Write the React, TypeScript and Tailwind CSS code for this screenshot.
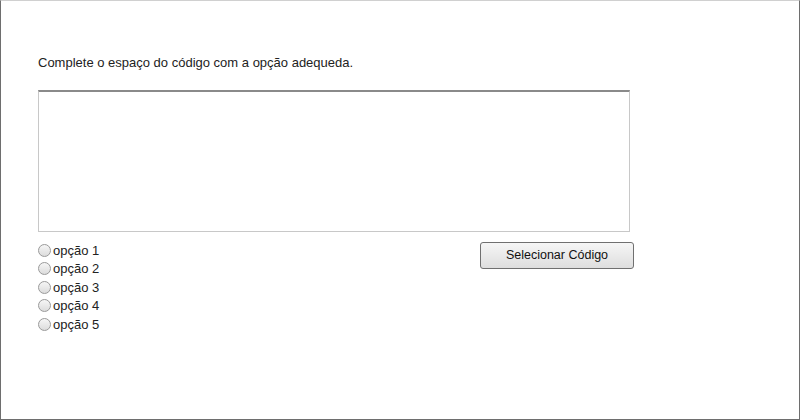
import React from "react";

const options = ["opção 1", "opção 2", "opção 3", "opção 4", "opção 5"];

const RadioOption: React.FC<{ label: string }> = ({ label }) => (
  <label className="flex h-[18.5px] items-center">
    <span className="mr-[2px] h-[13px] w-[13px] rounded-full border border-[#9a9a9a] bg-gradient-to-b from-[#f6f6f6] to-[#dcdcdc]" />
    <span>{label}</span>
  </label>
);

export default function App() {
  return (
    <div className="h-[420px] w-[800px] border border-[#6e6e6e] border-t-[#d0d0d0] bg-white font-['Liberation_Sans',Arial,sans-serif] text-[13px] text-[#222]">
      <div className="pl-[37px] pt-[54px]">
        <p className="leading-[16px]">Complete o espaço do código com a opção adequeda.</p>
        <div className="mt-[19px] h-[142px] w-[592px] border border-[#c8c8c8] border-t-2 border-t-[#8a8a8a]" />
        <div className="mt-[9px] flex w-[596px] items-start justify-between">
          <div className="flex flex-col">
            {options.map((o) => (
              <RadioOption key={o} label={o} />
            ))}
          </div>
          <button className="mt-[1px] h-[27px] w-[154px] rounded-[3px] border border-[#707070] bg-gradient-to-b from-[#f6f6f6] to-[#dedede] text-[12.5px] text-[#111]">
            Selecionar Código
          </button>
        </div>
      </div>
    </div>
  );
}
